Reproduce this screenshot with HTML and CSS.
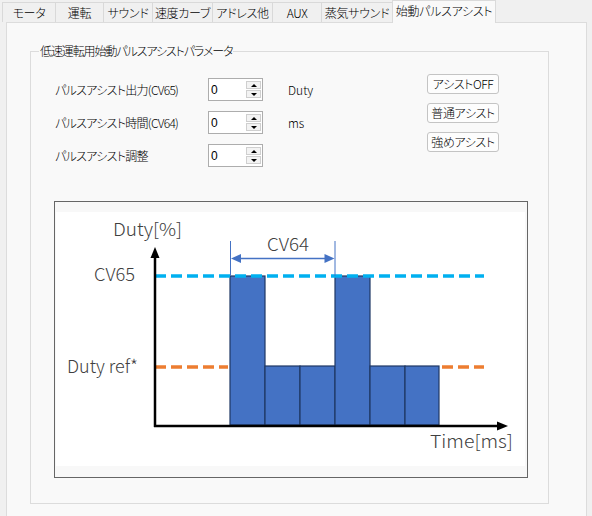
FILE: index.html
```html
<!DOCTYPE html>
<html lang="ja">
<head>
<meta charset="utf-8">
<link rel="stylesheet" href="styles.css">
</head>
<body>
<div class="tabs">
  <div class="tab">モータ</div>
  <div class="tab">運転</div>
  <div class="tab">サウンド</div>
  <div class="tab">速度カーブ</div>
  <div class="tab">アドレス他</div>
  <div class="tab">AUX</div>
  <div class="tab">蒸気サウンド</div>
  <div class="tab active">始動パルスアシスト</div>
</div>
<div class="panel">
  <fieldset class="group">
    <legend>低速運転用始動パルスアシストパラメータ</legend>
    <div class="top">
      <div class="params">
        <div class="label">パルスアシスト出力(CV65)</div>
        <div class="spin"><span class="val">0</span><span class="btns"><span class="b up"></span><span class="b down"></span></span></div>
        <div class="unit">Duty</div>
        <div class="label">パルスアシスト時間(CV64)</div>
        <div class="spin"><span class="val">0</span><span class="btns"><span class="b up"></span><span class="b down"></span></span></div>
        <div class="unit">ms</div>
        <div class="label">パルスアシスト調整</div>
        <div class="spin"><span class="val">0</span><span class="btns"><span class="b up"></span><span class="b down"></span></span></div>
        <div class="unit"></div>
      </div>
      <div class="buttons">
        <button class="btn">アシストOFF</button>
        <button class="btn">普通アシスト</button>
        <button class="btn">強めアシスト</button>
      </div>
    </div>
    <div class="chart">
      <svg width="472" height="275" viewBox="0 0 472 275" xmlns="http://www.w3.org/2000/svg">
        <rect x="1" y="10" width="469" height="254" fill="#ffffff"/>
        <g fill="#4472c4" stroke="#1f3864" stroke-width="1.2">
          <rect x="175" y="74" width="35" height="149"/>
          <rect x="210" y="164" width="35" height="59"/>
          <rect x="245" y="164" width="35" height="59"/>
          <rect x="280" y="74" width="35" height="149"/>
          <rect x="315" y="164" width="35" height="59"/>
          <rect x="350" y="164" width="34" height="59"/>
        </g>
        <g stroke="#ed7d31" stroke-width="3.5" stroke-dasharray="11 5">
          <line x1="100" y1="165" x2="173" y2="165"/>
          <line x1="387" y1="165" x2="429" y2="165"/>
        </g>
        <line x1="100" y1="74" x2="429" y2="74" stroke="#00b0f0" stroke-width="3.5" stroke-dasharray="11 5"/>
        <g stroke="#4472c4" stroke-width="1">
          <line x1="175.5" y1="39" x2="175.5" y2="74"/>
          <line x1="280" y1="39" x2="280" y2="74"/>
          <line x1="184" y1="56.5" x2="271" y2="56.5" stroke-width="1.3"/>
        </g>
        <g fill="#4472c4">
          <polygon points="176,56.5 186,52 186,61"/>
          <polygon points="279.5,56.5 269.5,52 269.5,61"/>
        </g>
        <g stroke="#000" stroke-width="2.5">
          <line x1="100" y1="225" x2="100" y2="53"/>
          <line x1="99" y1="224" x2="445" y2="224"/>
        </g>
        <g fill="#000">
          <polygon points="100,45 95.5,56 104.5,56"/>
          <polygon points="453,224 442,219.5 442,228.5"/>
        </g>
        <g class="ctext">
          <text x="58" y="34" textLength="69" lengthAdjust="spacingAndGlyphs">Duty[%]</text>
          <text x="39" y="79" textLength="41" lengthAdjust="spacingAndGlyphs">CV65</text>
          <text x="212" y="49" textLength="42" lengthAdjust="spacingAndGlyphs">CV64</text>
          <text x="12" y="171" textLength="71" lengthAdjust="spacingAndGlyphs">Duty ref*</text>
          <text x="375" y="246" textLength="83" lengthAdjust="spacingAndGlyphs">Time[ms]</text>
        </g>
      </svg>
    </div>
  </fieldset>
</div>
</body>
</html>
```
FILE: styles.css
```css
html, body {
  margin: 0;
  padding: 0;
}
body {
  background: #f0f0f0;
  font-family: "Noto Sans CJK JP", "Noto Sans", sans-serif;
  font-feature-settings: "palt";
  font-size: 12px;
  font-weight: 300;
  color: #000;
  width: 592px;
  height: 516px;
  overflow: hidden;
}
.tabs {
  display: flex;
  align-items: flex-end;
  height: 22px;
  padding-left: 2px;
  position: relative;
  z-index: 1;
}
.tab {
  box-sizing: border-box;
  height: 20px;
  border: 1px solid #d9d9d9;
  border-bottom: none;
  margin-right: -1px;
  background: #f0f0f0;
  display: flex;
  align-items: center;
  justify-content: center;
  line-height: 1;
  white-space: nowrap;
  letter-spacing: -0.3px;
}
.tab:nth-child(1) { width: 54px; }
.tab:nth-child(2) { width: 49px; }
.tab:nth-child(3) { width: 50px; }
.tab:nth-child(4) { width: 61px; }
.tab:nth-child(5) { width: 61px; }
.tab:nth-child(6) { width: 50px; }
.tab:nth-child(7) { width: 72px; }
.tab.active {
  width: 104px;
  height: 23px;
  margin-bottom: -1px;
  background: #f9f9f9;
  padding-bottom: 2px;
  border-color: #dadada;
}
.panel {
  box-sizing: border-box;
  margin-left: 6px;
  width: 581px;
  height: 516px;
  border: 1px solid #dcdcdc;
  border-bottom: none;
  background: #f9f9f9;
  padding-top: 20px;
  padding-left: 23px;
}
.group {
  box-sizing: border-box;
  margin: 0;
  width: 519px;
  padding: 0 0 25px 23px;
  border: 1px solid #dcdcdc;
}
.group legend {
  margin-left: -15px;
  padding: 0 1px;
  line-height: 16px;
  color: #000;
  letter-spacing: -1.1px;
}
.top {
  display: flex;
  padding-top: 15px;
}
.params {
  display: grid;
  grid-template-columns: 153px 55px 164px;
  grid-auto-rows: 23px;
  row-gap: 10px;
  margin-top: 4px;
  margin-left: 1px;
  align-items: center;
}
.label {
  white-space: nowrap;
  line-height: 1;
  letter-spacing: -0.7px;
}
.unit {
  padding-left: 25px;
  line-height: 1;
}
.spin {
  box-sizing: border-box;
  height: 23px;
  width: 55px;
  border: 1px solid #adadad;
  background: #fff;
  display: flex;
  align-items: center;
  justify-content: space-between;
  padding: 0 1px 0 2px;
}
.val {
  line-height: 1;
  font-family: "Liberation Sans", sans-serif;
  font-size: 12px;
  font-weight: 400;
}
.btns {
  display: flex;
  flex-direction: column;
  gap: 1px;
}
.b {
  box-sizing: border-box;
  width: 15px;
  height: 8px;
  border: 1px solid #cfcfcf;
  background: #f3f3f3;
  display: flex;
  align-items: center;
  justify-content: center;
}
.b::after {
  content: "";
  width: 0;
  height: 0;
  border-left: 3px solid transparent;
  border-right: 3px solid transparent;
}
.b.up::after {
  border-bottom: 3px solid #000;
}
.b.down::after {
  border-top: 3px solid #000;
}
.buttons {
  display: flex;
  flex-direction: column;
  gap: 9px;
}
.btn {
  box-sizing: border-box;
  width: 72px;
  height: 20px;
  border: 1px solid #c4c4c4;
  border-radius: 3px;
  background: #fdfdfd;
  font-family: inherit;
  font-feature-settings: "palt";
  font-size: 12px;
  font-weight: 300;
  letter-spacing: -0.4px;
  color: #000;
  padding: 0;
  line-height: 1;
}
.chart {
  box-sizing: border-box;
  margin-top: 34px;
  width: 474px;
  height: 277px;
  border: 1px solid #666;
  background: #f8f8f8;
}
.chart svg {
  display: block;
}
.ctext text {
  font-family: "Noto Sans CJK JP", "Noto Sans", sans-serif;
  font-size: 18px;
  font-weight: 300;
  fill: #404040;
}
```
